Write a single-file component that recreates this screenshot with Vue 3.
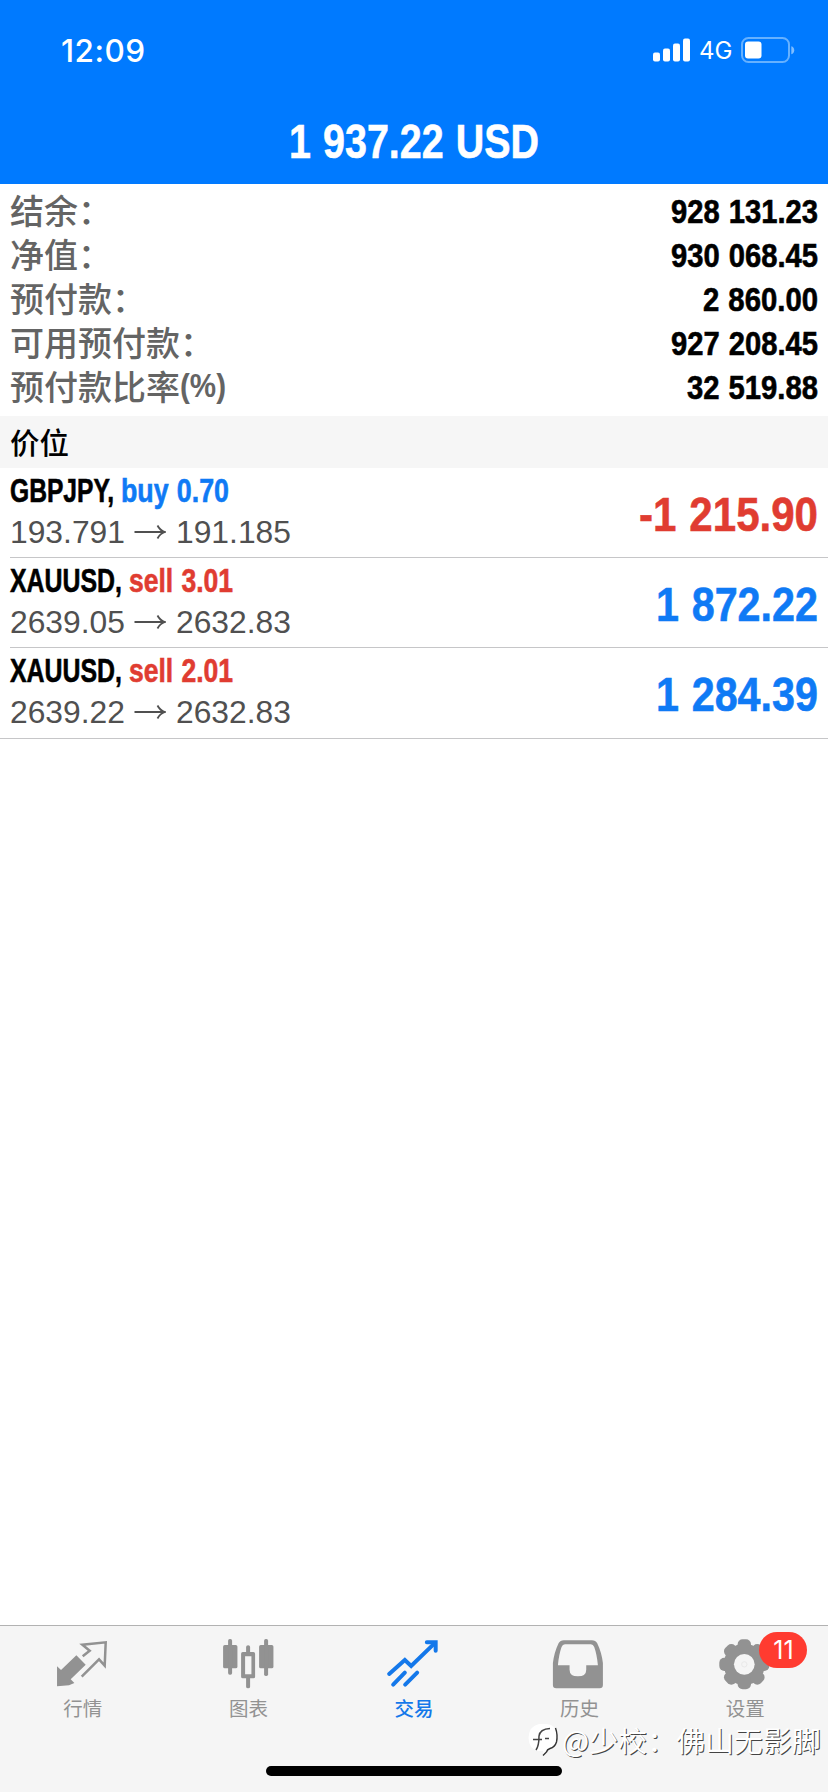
<script setup>
import { h } from 'vue'

// Single line of text set to an exact advance width (condensed headline face).
const FitText = ({ text, size, w }) =>
  h('svg', { class: 'fit', width: w, height: Math.round(size * 1.15), 'font-size': size }, [
    h('text', { x: 0, y: size * 0.9, textLength: w, lengthAdjust: 'spacingAndGlyphs' }, text),
  ])
FitText.props = ['text', 'size', 'w']

const summary = [
  { label: '结余：', value: '928 131.23', w: 147 },
  { label: '净值：', value: '930 068.45', w: 147 },
  { label: '预付款：', value: '2 860.00', w: 115 },
  { label: '可用预付款：', value: '927 208.45', w: 147 },
  { label: '预付款比率', suffix: '(%)', value: '32 519.88', w: 131 },
]

const positions = [
  { symbol: 'GBPJPY,', sw: 104, action: 'buy 0.70', aw: 108, side: 'buy', from: '193.791', to: '191.185', profit: '-1 215.90', pw: 179, tone: 'loss' },
  { symbol: 'XAUUSD,', sw: 112, action: 'sell 3.01', aw: 104, side: 'sell', from: '2639.05', to: '2632.83', profit: '1 872.22', pw: 162, tone: 'gain' },
  { symbol: 'XAUUSD,', sw: 112, action: 'sell 2.01', aw: 104, side: 'sell', from: '2639.22', to: '2632.83', profit: '1 284.39', pw: 162, tone: 'gain' },
]

const teeth = [0, 45, 90, 135, 180, 225, 270, 315]
</script>

<template>
  <div class="screen">
    <header class="top">
      <div class="status">
        <span class="time">12:09</span>
        <div class="status-right">
          <svg class="signal" width="38" height="24" viewBox="0 0 38 24" fill="#fff">
            <rect x="0" y="14.5" width="7" height="9" rx="2" />
            <rect x="10" y="10.5" width="7" height="13" rx="2" />
            <rect x="20" y="5.5" width="7" height="18" rx="2" />
            <rect x="30" y="0.5" width="7" height="23" rx="2" />
          </svg>
          <span class="net">4G</span>
          <svg class="battery" width="54" height="26" viewBox="0 0 54 26">
            <rect x="1" y="1" width="47" height="24" rx="6.5" fill="none" stroke="#66b1ff" stroke-width="2" />
            <rect x="4" y="4.5" width="16.5" height="17" rx="3" fill="#fff" />
            <path d="M50.3 9.2c2 .6 2.9 2 2.9 4s-.9 3.4-2.9 4z" fill="#7fbdff" />
          </svg>
        </div>
      </div>
      <div class="title"><FitText text="1 937.22 USD" :size="49" :w="250" /></div>
    </header>

    <section class="summary">
      <div v-for="row in summary" :key="row.label" class="sum-row">
        <div class="label">{{ row.label }}<FitText v-if="row.suffix" :text="row.suffix" :size="33" :w="46" /></div>
        <div class="value"><FitText :text="row.value" :size="34" :w="row.w" /></div>
      </div>
    </section>

    <div class="section-head">价位</div>

    <section class="list">
      <div v-for="(p, i) in positions" :key="i" class="pos">
        <div class="info">
          <div class="line1">
            <FitText :text="p.symbol" :size="33" :w="p.sw" />
            <span :class="p.side"><FitText :text="p.action" :size="33" :w="p.aw" /></span>
          </div>
          <div class="line2">
            <span class="price">{{ p.from }}</span>
            <svg class="arrow" width="32" height="16" viewBox="0 0 32 16" fill="none" stroke="#505050" stroke-width="1.8">
              <path d="M0.500 8H30.500M23.500 1.500Q26 6.500 31 8Q26 9.500 23.500 14.500" />
            </svg>
            <span class="price">{{ p.to }}</span>
          </div>
        </div>
        <div class="profit" :class="p.tone"><FitText :text="p.profit" :size="49" :w="p.pw" /></div>
      </div>
    </section>

    <nav class="tabs">
      <div class="tab">
        <svg class="icon" viewBox="165.9 80 165 165">
          <path d="M230 135L258 163L213 207L224 218L208 225L172 228V168L184 179Z" fill="#929292" />
          <path d="M249 138L270 121L248 103L318 96L315 166L298 147L246 199" fill="none" stroke="#929292" stroke-width="7.5" />
        </svg>
        <span>行情</span>
      </div>
      <div class="tab">
        <svg class="icon" viewBox="662.7 80 165 165" fill="#929292">
          <rect x="669" y="104" width="43" height="70" rx="5" />
          <rect x="684" y="86" width="12" height="107" rx="5" />
          <rect x="777" y="104" width="43" height="70" rx="5" />
          <rect x="792" y="86" width="12" height="111" rx="5" />
          <path fill-rule="evenodd" d="M728 125H738V110Q738 105 744 105T750 110V125H760Q765 125 765 130V199Q765 204 760 204H750V229Q750 234 744 234T738 229V204H728Q723 204 723 199V130Q723 125 728 125ZM735 138V192H754V138Z" />
        </svg>
        <span>图表</span>
      </div>
      <div class="tab active">
        <svg class="icon" viewBox="259.5 80 165 165" fill="none" stroke="#1478ea" stroke-width="12" stroke-linecap="round">
          <path d="M269 191L316 149L335 167L405 99M281 223L316 187M317 223L353 187" />
          <path d="M382 95.5H408.5V121" />
        </svg>
        <span>交易</span>
      </div>
      <div class="tab">
        <svg class="icon" viewBox="126.3 80 165 165">
          <path fill="#929292" fill-rule="evenodd" d="M162 90H246Q257 90 262 99Q275 126 279 158V224Q279 234 269 234H139Q129 234 129 224V158Q133 126 146 99Q151 90 162 90ZM165 102Q158 102 155 110Q147 132 144 165H179V178Q179 198 204 198T229 178V165H264Q261 132 253 110Q250 102 243 102Z" />
        </svg>
        <span>历史</span>
      </div>
      <div class="tab">
        <svg class="icon" viewBox="623.1 80 165 165">
          <g fill="#929292">
            <circle cx="702" cy="162" r="62" />
            <rect v-for="a in teeth" :key="a" x="682" y="87" width="40" height="50" rx="15" :transform="`rotate(${a} 702 162)`" />
          </g>
          <circle cx="702" cy="162" r="31" fill="#f5f5f5" />
          <circle cx="702" cy="162" r="8" fill="none" stroke="#e9e9e9" stroke-width="3" />
        </svg>
        <span>设置</span>
        <b class="badge">11</b>
      </div>
      <div class="home"></div>
      <div class="mark">
        <svg width="32" height="34" viewBox="0 0 32 34">
          <path d="M11 1H19Q28 2 28.500 12Q28.500 22 24 24Q19 26 18 28L15 32V28H10Q1 26 .5 15Q1 3 11 1Z" fill="#fff" />
          <path d="M27.500 5Q30 12 28.500 19Q27 24 22 25.500Q19 26.500 18.500 29L15 32.500" fill="none" stroke="#333" stroke-width="1.4" />
          <path d="M8 27Q11 23 11 13Q12 6 22 5.500M5 16.500H14M17 15.500H21" fill="none" stroke="#444" stroke-width="1.5" />
        </svg>
        <span>@少校：佛山无影脚</span>
      </div>
    </nav>
  </div>
</template>

<style>
html, body { background: #fff; }
</style>

<style scoped>
.screen {
  width: 828px;
  height: 1792px;
  display: flex;
  flex-direction: column;
  background: #fff;
  overflow: hidden;
  font-family: "Liberation Sans", "Noto Sans CJK SC", sans-serif;
}
.fit {
  display: block;
  flex: none;
  overflow: visible;
  fill: currentColor;
  stroke: currentColor;
  stroke-width: .6px;
  word-spacing: .03em;
  font-family: "Liberation Sans", sans-serif;
  font-weight: 700;
}
.label .fit { stroke: none; }
.top {
  height: 184px;
  flex: none;
  box-sizing: border-box;
  background: #007aff;
  color: #fff;
}
.status {
  height: 100px;
  box-sizing: border-box;
  padding: 0 33px 0 61px;
  display: flex;
  justify-content: space-between;
  align-items: center;
  font-family: Inter, sans-serif;
}
.time { font-size: 31.5px; font-weight: 500; letter-spacing: .5px; }
.status-right { display: flex; align-items: center; margin-top: -1px; }
.net { font-size: 24px; font-weight: 400; margin: 2px 9px 0 8px; width: 33px; }
.title { display: flex; justify-content: center; padding-top: 14px; }
.summary { height: 232px; flex: none; box-sizing: border-box; padding: 5px 10px 0; }
.sum-row { height: 44px; display: flex; justify-content: space-between; align-items: center; }
.value { padding-top: 1px; }
.label {
  display: flex;
  align-items: center;
  margin-top: -2px;
  color: #646464;
  font: 500 34px/44px "Noto Sans CJK SC", sans-serif;
}
.section-head {
  height: 51.5px;
  flex: none;
  padding-left: 10px;
  background: #f6f6f6;
  font: 500 29.5px/50px "Noto Sans CJK SC", sans-serif;
}
.list { border-bottom: 1px solid #c6c6c8; flex: none; }
.pos {
  height: 90px;
  box-sizing: border-box;
  margin-left: 10px;
  padding-right: 10px;
  display: flex;
  justify-content: space-between;
  align-items: flex-start;
  border-bottom: 1px solid #c6c6c8;
}
.pos:last-child { border-bottom: 0; }
.line1 { display: flex; gap: 7px; padding-top: 4px; }
.line2 { display: flex; align-items: center; height: 36px; margin-top: 4px; color: #505050; font-size: 31.8px; line-height: 36px; }
.price { width: 114px; }
.arrow { margin: 0 10px; }
.profit { padding-top: 19px; }
.buy, .gain { color: #0f7af5; }
.sell, .loss { color: #e03c31; }
.tabs {
  position: relative;
  margin-top: auto;
  height: 167px;
  flex: none;
  box-sizing: border-box;
  border-top: 1px solid #b2b2b2;
  background: #f5f5f5;
  display: grid;
  grid-template-columns: repeat(5, 1fr);
}
.tab {
  position: relative;
  display: flex;
  flex-direction: column;
  align-items: center;
  padding-top: 11px;
  color: #929292;
  font: 400 19.5px/28px "Noto Sans CJK SC", sans-serif;
}
.active { color: #1478ea; font-weight: 500; }
.icon { width: 55px; height: 55px; margin-bottom: 2px; }
.badge {
  position: absolute;
  left: 97px;
  top: 6px;
  width: 48px;
  height: 36px;
  border-radius: 18px;
  background: #ff3b30;
  color: #fff;
  font: 400 25px/36px Inter, sans-serif;
  text-align: center;
}
.home { position: absolute; left: 266px; top: 140px; width: 296px; height: 10px; border-radius: 5px; background: #000; }
.mark { position: absolute; left: 528px; top: 95px; display: flex; align-items: center; white-space: nowrap; color: #fff; font: 400 28.7px/38px "Noto Sans CJK SC", sans-serif; letter-spacing: .25px; text-shadow: 1px 1px 0 #444; }
.mark span { margin-left: 2px; }
</style>
